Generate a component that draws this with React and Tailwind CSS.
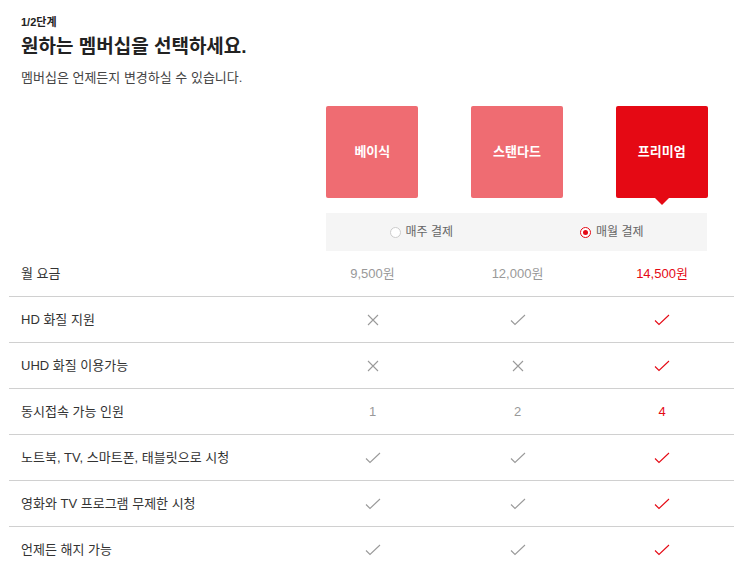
import React from 'react';

const font = { fontFamily: '"Liberation Sans", "Noto Sans CJK KR", sans-serif' };

const Check = ({ red }) => (
  <svg width="16" height="12" viewBox="0 0 16 12" fill="none">
    <path d="M1 6.5 L5 10.5 L15 1" stroke={red ? '#e50914' : '#9a9a9a'} strokeWidth="1.1" />
  </svg>
);

const Cross = () => (
  <svg width="12" height="12" viewBox="0 0 12 12" fill="none">
    <path d="M1 1 L11 11 M11 1 L1 11" stroke="#9a9a9a" strokeWidth="1.1" />
  </svg>
);

const rows = [
  { label: 'HD 화질 지원', vals: ['x', 'v', 'v'] },
  { label: 'UHD 화질 이용가능', vals: ['x', 'x', 'v'] },
  { label: '동시접속 가능 인원', vals: ['1', '2', '4'] },
  { label: '노트북, TV, 스마트폰, 태블릿으로 시청', vals: ['v', 'v', 'v'] },
  { label: '영화와 TV 프로그램 무제한 시청', vals: ['v', 'v', 'v'] },
  { label: '언제든 해지 가능', vals: ['v', 'v', 'v'] },
];

const Cell = ({ v, red }) => {
  if (v === 'v') return <Check red={red} />;
  if (v === 'x') return <Cross />;
  return <span className={red ? 'text-[#e50914]' : 'text-[#999]'}>{v}</span>;
};

export default function App() {
  return (
    <div className="w-[737px] h-[574px] bg-white overflow-hidden text-[#333]" style={font}>
      <div className="pl-[21px] pt-[15px]">
        <div className="text-[11px] font-bold leading-[14px] text-[#222]">1/2단계</div>
        <h1 className="mt-[6px] text-[19px] font-bold leading-[24px] text-[#222]">원하는 멤버십을 선택하세요.</h1>
        <p className="mt-[10px] text-[13px] leading-[18px] text-[#444]">멤버십은 언제든지 변경하실 수 있습니다.</p>
      </div>

      <div className="ml-[300px] w-[434px] mt-[19px] flex">
        {['베이식', '스탠다드', '프리미엄'].map((n, i) => (
          <div key={n} className="w-[145px] flex justify-center">
            <div
              className={`relative w-[92px] h-[92px] rounded-[2px] flex items-center justify-center text-white text-[13px] font-bold ${
                i === 2 ? 'bg-[#e50914]' : 'bg-[#ef6c72]'
              }`}
            >
              {n}
              {i === 2 && (
                <div className="absolute left-1/2 -translate-x-1/2 top-full w-0 h-0 border-l-[7px] border-r-[7px] border-t-[7px] border-l-transparent border-r-transparent border-t-[#e50914]" />
              )}
            </div>
          </div>
        ))}
      </div>

      <div className="ml-[326px] w-[381px] h-[38px] mt-[15px] bg-[#f5f5f5] flex text-[12px] text-[#666]">
        <div className="flex-1 flex items-center justify-center gap-[5px]">
          <span className="w-[11px] h-[11px] rounded-full border border-[#ccc] bg-white" />
          <span>매주 결제</span>
        </div>
        <div className="flex-1 flex items-center justify-center gap-[5px]">
          <span className="w-[11px] h-[11px] rounded-full border border-[#e50914] bg-white flex items-center justify-center">
            <span className="w-[5px] h-[5px] rounded-full bg-[#e50914]" />
          </span>
          <span>매월 결제</span>
        </div>
      </div>

      <div className="ml-[9px] w-[725px] text-[13px]">
        <div className="flex h-[46px] items-center border-b border-[#d0d0d0]">
          <div className="w-[291px] pl-[12px] text-[#333]">월 요금</div>
          <div className="w-[145px] text-center text-[#999]">9,500원</div>
          <div className="w-[145px] text-center text-[#999]">12,000원</div>
          <div className="w-[144px] text-center text-[#e50914]">14,500원</div>
        </div>
        {rows.map((r, idx) => (
          <div
            key={r.label}
            className={`flex h-[46px] items-center ${idx < rows.length - 1 ? 'border-b border-[#d0d0d0]' : ''}`}
          >
            <div className="w-[291px] pl-[12px] text-[#333]">{r.label}</div>
            {r.vals.map((v, i) => (
              <div key={i} className={`${i === 2 ? 'w-[144px]' : 'w-[145px]'} flex justify-center`}>
                <Cell v={v} red={i === 2} />
              </div>
            ))}
          </div>
        ))}
      </div>
    </div>
  );
}
